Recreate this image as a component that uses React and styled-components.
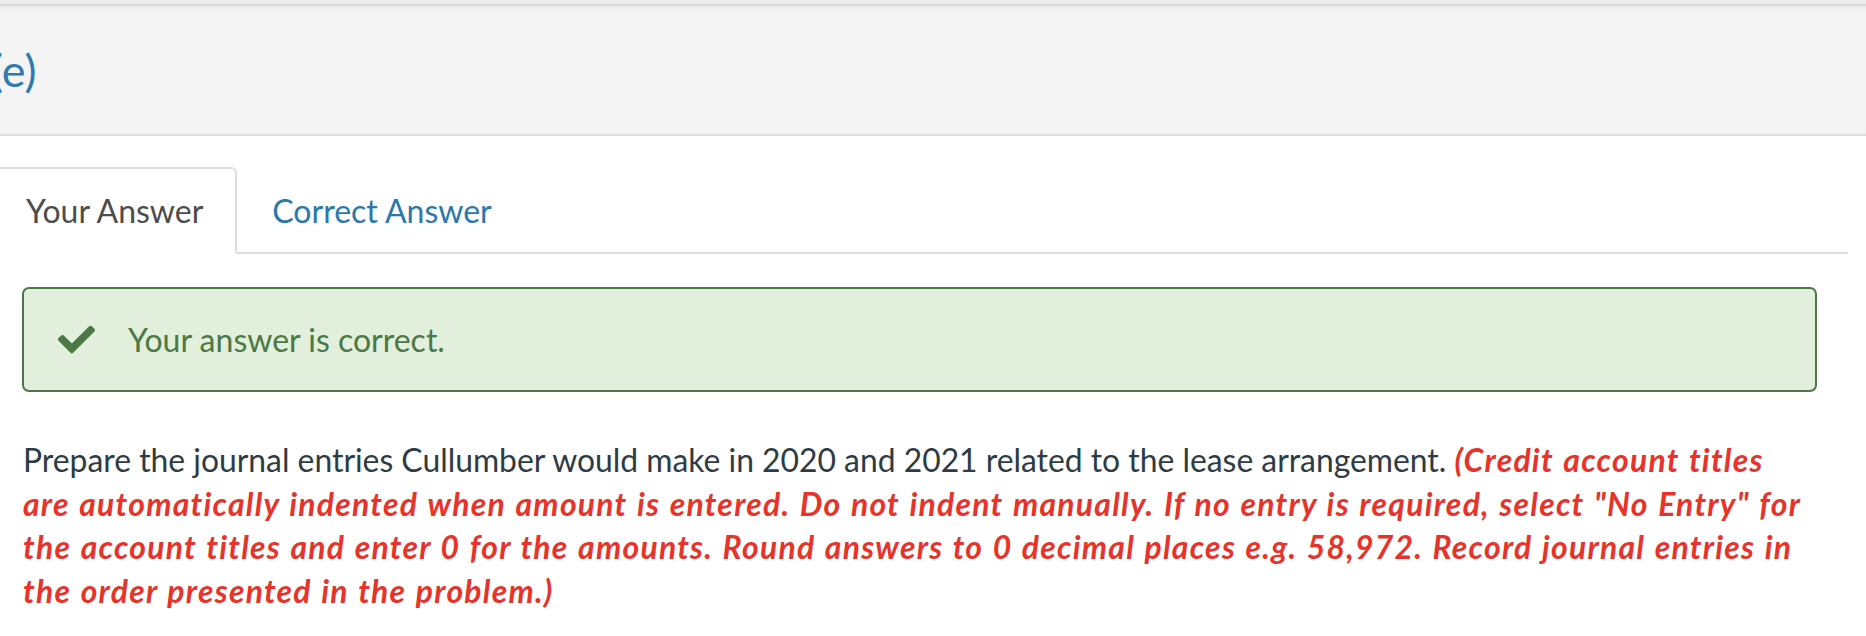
import React from "react";
import styled, { createGlobalStyle } from "styled-components";
import { FaCheck } from "react-icons/fa";

const Global = createGlobalStyle`
  html, body { margin: 0; padding: 0; background: #fff; }
  body { font-family: Lato, "Open Sans", sans-serif; overflow: hidden; }
`;

const Page = styled.div`
  width: 1866px;
  height: 636px;
  background: #fff;
  overflow: hidden;
`;

const TopStrip = styled.div`
  height: 4px;
  background: #ececec;
`;

const HeaderPanel = styled.header`
  box-sizing: border-box;
  height: 132px;
  background: #f4f4f4;
  border-top: 2px solid #d9d9d9;
  border-bottom: 2px solid #dddddd;
  box-shadow: inset 0 5px 5px -3px rgba(0, 0, 0, 0.05);
  display: flex;
  align-items: center;
`;

const Title = styled.h2`
  margin: 0 0 0 -9px;
  font-size: 45px;
  font-weight: 400;
  color: #2f7bb1;
  line-height: 1;
`;

const Content = styled.main`
  width: 1848px;
  padding-top: 31px;
`;

const TabList = styled.nav`
  display: flex;
  gap: 1px;
  margin-left: -8px;
  border-bottom: 2px solid #dddddd;
`;

const Tab = styled.div`
  box-sizing: border-box;
  height: 87px;
  margin-bottom: -2px;
  padding: 0 32px;
  display: flex;
  align-items: center;
  font-size: 32px;
  border: 2px solid ${(p) => (p.$active ? "#dddddd" : "transparent")};
  border-bottom-color: ${(p) => (p.$active ? "#ffffff" : "transparent")};
  border-radius: 6px 6px 0 0;
  background: ${(p) => (p.$active ? "#ffffff" : "transparent")};
  color: ${(p) => (p.$active ? "#4d4d4d" : "#2b78ad")};
`;

const Alert = styled.div`
  box-sizing: border-box;
  height: 105px;
  margin: 33px 31px 0 22px;
  padding-left: 34px;
  display: flex;
  align-items: center;
  gap: 33px;
  background: #e1efdc;
  border: 2px solid #4b7844;
  border-radius: 7px;
  color: #4b7844;
  font-size: 32px;
`;

const CheckIcon = styled(FaCheck)`
  width: 37px;
  height: 37px;
  flex: none;
  color: #4b7844;
`;

const Instructions = styled.p`
  margin: 47px 31px 0 23px;
  font-size: 31.85px;
  line-height: 43.5px;
  color: #2d3b45;
`;

const Warning = styled.span`
  color: #e8322a;
  font-style: italic;
  font-weight: 700;
  letter-spacing: 0.04em;
  word-spacing: 1.2px;
`;

export default function App() {
  return (
    <Page>
      <Global />
      <TopStrip />
      <HeaderPanel>
        <Title>(e)</Title>
      </HeaderPanel>
      <Content>
        <TabList>
          <Tab $active>Your Answer</Tab>
          <Tab>Correct Answer</Tab>
        </TabList>
        <Alert>
          <CheckIcon />
          <span>Your answer is correct.</span>
        </Alert>
        <Instructions>
          Prepare the journal entries Cullumber would make in 2020 and 2021 related to the lease arrangement.{" "}
          <Warning>
            (Credit account titles are automatically indented when amount is entered. Do not indent manually. If no
            entry is required, select "No Entry" for the account titles and enter 0 for the amounts. Round answers to 0
            decimal places e.g. 58,972. Record journal entries in the order presented in the problem.)
          </Warning>
        </Instructions>
      </Content>
    </Page>
  );
}
